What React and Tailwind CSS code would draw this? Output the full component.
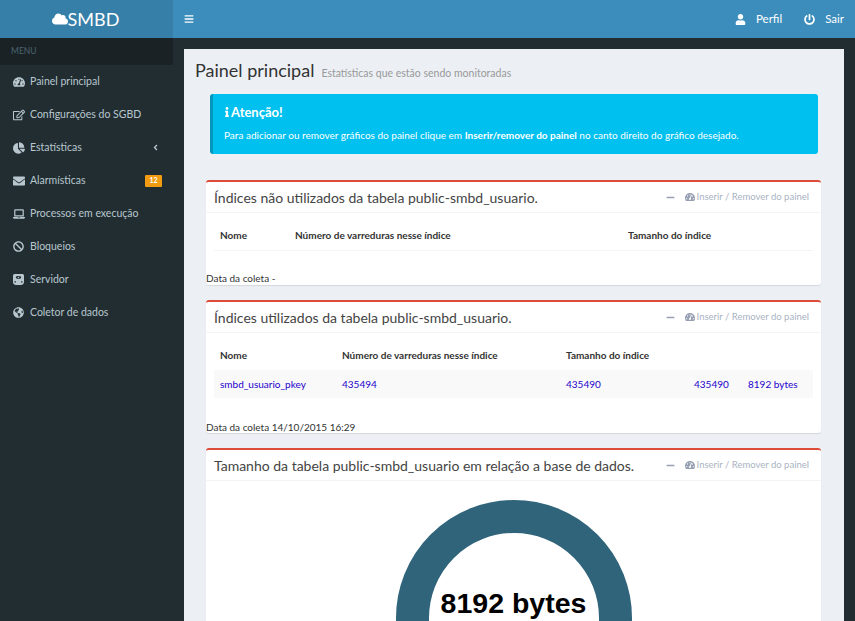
import { FaAngleLeft, FaBan, FaBars, FaChartPie, FaCloud, FaEnvelope, FaGlobeAmericas, FaInfo, FaLaptop, FaMinus, FaPowerOff, FaRegEdit, FaTachometerAlt, FaUser } from "react-icons/fa"

const ServerIcon = ({ className }) => (
  <svg viewBox="0 0 14 14" className={className} fill="currentColor">
    <path d="M2 0h10a2 2 0 0 1 2 2v8a4 4 0 0 1-4 4H4a4 4 0 0 1-4-4V2a2 2 0 0 1 2-2z" />
    <ellipse cx="7" cy="4.5" rx="3.5" ry="1.8" fill="#222d32" />
    <circle cx="7" cy="4.5" r="1" />
    <rect x="2" y="9" width="1.5" height="2" fill="#222d32" />
    <rect x="10.5" y="9" width="1.5" height="2" fill="#222d32" />
  </svg>
)

const menu = [
  { label: "Painel principal", icon: <FaTachometerAlt className="h-[12px] w-[12px]" /> },
  { label: "Configurações do SGBD", icon: <FaRegEdit className="h-[12px] w-[12px]" /> },
  { label: "Estatísticas", icon: <FaChartPie className="h-[12px] w-[12px]" />, arrow: true },
  { label: "Alarmísticas", icon: <FaEnvelope className="h-[12px] w-[12px]" />, badge: "12" },
  { label: "Processos em execução", icon: <FaLaptop className="h-[12px] w-[12px]" /> },
  { label: "Bloqueios", icon: <FaBan className="h-[11px] w-[11px]" /> },
  { label: "Servidor", icon: <ServerIcon className="h-[11px] w-[11px]" /> },
  { label: "Coletor de dados", icon: <FaGlobeAmericas className="h-[11px] w-[11px]" /> },
]

const Panel = ({ title, height, children }) => (
  <div className={`ml-[22px] mr-[23px] mb-[15px] flex-none rounded-[3px] border-t-2 border-[#dd4b39] bg-white shadow-[0_1px_1px_rgba(0,0,0,0.1)] ${height}`}>
    <div className="flex h-[31px] items-center justify-between border-b border-[#f4f4f4] pl-2 pr-3">
      <h3 className="whitespace-nowrap text-[14px] text-[#444]">{title}</h3>
      <div className="flex items-center whitespace-nowrap text-[9.5px] text-[#a9b3c2]">
        <FaMinus className="mr-[10px] h-[9px] w-[9px] text-[#97a0b3]" />
        <FaTachometerAlt className="mr-[2px] h-[10px] w-[10px] text-[#97a0b3]" />
        Inserir / Remover do painel
      </div>
    </div>
    {children}
  </div>
)

export default function App() {
  return (
    <div className="flex h-[621px] w-[855px] flex-col overflow-hidden bg-[#222d32] font-['Lato',sans-serif]">
      {/* Header */}
      <header className="flex h-[38px] flex-none bg-[#3c8dbc] text-white">
        <div className="flex w-[173px] items-center justify-center pr-[2px] bg-[#367fa9] text-[18px]">
          <FaCloud className="h-[16px] w-[16px]" />
          <span>SMBD</span>
        </div>
        <div className="flex flex-1 items-center justify-between pl-[11px] pr-[11px]">
          <FaBars className="h-[10px] w-[10px]" />
          <div className="flex items-center text-[11.5px]">
            <FaUser className="mr-[10px] h-[11px] w-[11px]" />
            <span className="mr-[22px]">Perfil</span>
            <FaPowerOff className="mr-[10px] h-[11px] w-[11px]" />
            <span>Sair</span>
          </div>
        </div>
      </header>

      <div className="flex min-h-0 flex-1">
        {/* Sidebar */}
        <aside className="w-[184px] flex-none">
          <div className="flex h-[27px] w-[173px] items-center bg-[#1a2226] pl-[11px] text-[8.5px] text-[#4b646f]">MENU</div>
          <ul className="w-[173px] text-[10.5px] text-[#b8c7ce]">
            {menu.map((item) => (
              <li key={item.label} className="flex h-[33px] items-center pl-[13px] pr-[12px]">
                <span className="flex w-[17px] flex-none">{item.icon}</span>
                <span className="flex-1">{item.label}</span>
                {item.arrow && <FaAngleLeft className="mr-[1px] h-[9px] w-[9px]" />}
                {item.badge && (
                  <span className="mr-[-1px] flex h-[12px] w-[17px] items-center justify-center rounded-[1px] bg-[#f39c12] text-[7px] font-bold text-white">
                    {item.badge}
                  </span>
                )}
              </li>
            ))}
          </ul>
        </aside>

        {/* Content */}
        <main className="mt-[11px] flex w-[660px] flex-none flex-col overflow-hidden bg-[#ecf0f5]">
          <div className="flex h-[45px] flex-none items-baseline pl-[11px] pt-[8px]">
            <h1 className="text-[18px] text-[#333]">Painel principal</h1>
            <small className="ml-[7px] text-[10.5px] text-[#999]">Estatísticas que estão sendo monitoradas</small>
          </div>

          <div className="ml-[26px] mr-[26px] mb-[26px] h-[60px] flex-none rounded-[3px] border-l-[3px] border-[#0097bc] bg-[#00c0ef] pl-[11px] text-white">
            <h4 className="flex items-center pt-[9px] text-[13px] font-bold leading-[18px]">
              <FaInfo className="mr-[1px] h-[10px] w-[6px]" />
              Atenção!
            </h4>
            <p className="mt-[7px] text-[10px] leading-[14px]">
              Para adicionar ou remover gráficos do painel clique em <b>Inserir/remover do painel</b> no canto direito do gráfico desejado.
            </p>
          </div>

          <Panel title="Índices não utilizados da tabela public-smbd_usuario." height="h-[105px]">
            <div className="mx-2 mt-[7px] flex h-[31px] items-center border-b border-[#f4f4f4] pl-[6px] text-[10px] font-bold text-[#333]">
              <span className="w-[75px]">Nome</span>
              <span className="w-[333px]">Número de varreduras nesse índice</span>
              <span>Tamanho do índice</span>
            </div>
            <p className="mt-[20px] text-[10px] text-[#333]">Data da coleta -</p>
          </Panel>

          <Panel title="Índices utilizados da tabela public-smbd_usuario." height="h-[133px]">
            <div className="mx-2 mt-[8px] flex h-[29px] items-center pl-[6px] text-[10px] font-bold text-[#333]">
              <span className="w-[122px]">Nome</span>
              <span className="w-[224px]">Número de varreduras nesse índice</span>
              <span>Tamanho do índice</span>
            </div>
            <div className="mx-2 flex h-[28px] items-center bg-[#f9f9f9] pl-[6px] text-[10px] text-[#2200cc]">
              <span className="w-[122px]">smbd_usuario_pkey</span>
              <span className="w-[224px]">435494</span>
              <span className="w-[128px]">435490</span>
              <span className="w-[54px]">435490</span>
              <span>8192 bytes</span>
            </div>
            <p className="mt-[22px] text-[10px] text-[#333]">Data da coleta 14/10/2015 16:29</p>
          </Panel>

          <Panel title="Tamanho da tabela public-smbd_usuario em relação a base de dados." height="h-[300px]">
            <div className="relative h-[260px]">
              <svg viewBox="0 0 236 236" className="absolute left-[190px] top-[19px] h-[236px] w-[236px]">
                <circle cx="118" cy="118" r="101.5" fill="none" stroke="#30647b" strokeWidth="33" />
              </svg>
              <div className="absolute left-0 right-0 top-[104px] text-center font-['Liberation_Sans',sans-serif] text-[28.5px] font-bold leading-[36px] text-black">
                8192 bytes
              </div>
            </div>
          </Panel>
        </main>
      </div>
    </div>
  )
}
